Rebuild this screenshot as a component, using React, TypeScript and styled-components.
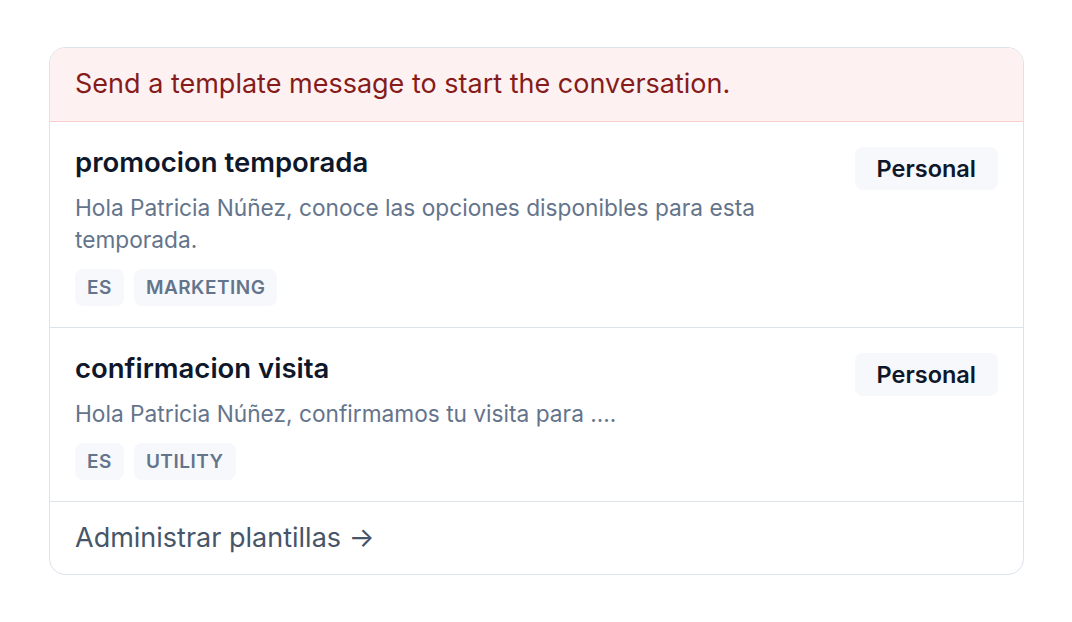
import styled, { createGlobalStyle } from "styled-components"

const GlobalStyle = createGlobalStyle`
  body {
    margin: 0;
    background: #ffffff;
    font-family: Inter, "Noto Sans", sans-serif;
    -webkit-font-smoothing: antialiased;
  }
`

interface Template {
  id: number
  name: string
  body: string
  tags: string[]
  owner: string
}

const templates: Template[] = [
  {
    id: 1,
    name: "promocion temporada",
    body: "Hola Patricia Núñez, conoce las opciones disponibles para esta temporada.",
    tags: ["ES", "MARKETING"],
    owner: "Personal",
  },
  {
    id: 2,
    name: "confirmacion visita",
    body: "Hola Patricia Núñez, confirmamos tu visita para ....",
    tags: ["ES", "UTILITY"],
    owner: "Personal",
  },
]

const App = () => {
  return (
    <Page>
      <GlobalStyle />
      <Card>
        <Notice>Send a template message to start the conversation.</Notice>
        {templates.map(t => (
          <Row key={t.id}>
            <Info>
              <Title>{t.name}</Title>
              <Body>{t.body}</Body>
              <Tags>
                {t.tags.map(tag => <Tag key={tag}>{tag}</Tag>)}
              </Tags>
            </Info>
            <Owner>{t.owner}</Owner>
          </Row>
        ))}
        <Footer>
          <ManageLink href="#">Administrar plantillas →</ManageLink>
        </Footer>
      </Card>
    </Page>
  )
}

export default App

const Page = styled.div`
  padding: 47px 48px 0 49px;
`

const Card = styled.div`
  width: 975px;
  box-sizing: border-box;
  border: 1.5px solid #dde3eb;
  border-radius: 16px;
  overflow: hidden;
  background: #fff;
`

const Notice = styled.div`
  background: #fef1f1;
  border-bottom: 1.5px solid #f8cfcf;
  color: #861b1b;
  font-size: 27px;
  line-height: 32px;
  padding: 20px 25px 21px;
`

const Row = styled.div`
  display: flex;
  justify-content: space-between;
  align-items: flex-start;
  gap: 24px;
  padding: 24px 25px 21px;
  border-bottom: 1.5px solid #dde3eb;
`

const Info = styled.div`
  display: flex;
  flex-direction: column;
  max-width: 740px;
`

const Title = styled.div`
  color: #0f172a;
  font-size: 27.5px;
  font-weight: 600;
  line-height: 32px;
`

const Body = styled.div`
  margin-top: 14px;
  color: #64748b;
  font-size: 22.7px;
  line-height: 32px;
`

const Tags = styled.div`
  display: flex;
  gap: 10px;
  margin-top: 13px;
`

const Tag = styled.span`
  background: #f6f8fb;
  color: #64748b;
  border-radius: 8px;
  font-size: 19px;
  font-weight: 600;
  letter-spacing: 0.5px;
  line-height: 37px;
  padding: 0 12px;
`

const Owner = styled.span`
  flex-shrink: 0;
  margin-top: 1px;
  background: #f6f8fb;
  color: #0f172a;
  border-radius: 8px;
  font-size: 23.5px;
  font-weight: 600;
  line-height: 43px;
  padding: 0 22px;
`

const Footer = styled.div`
  padding: 20px 25px 20px;
`

const ManageLink = styled.a`
  color: #475569;
  font-size: 27px;
  line-height: 32px;
  text-decoration: none;
`
